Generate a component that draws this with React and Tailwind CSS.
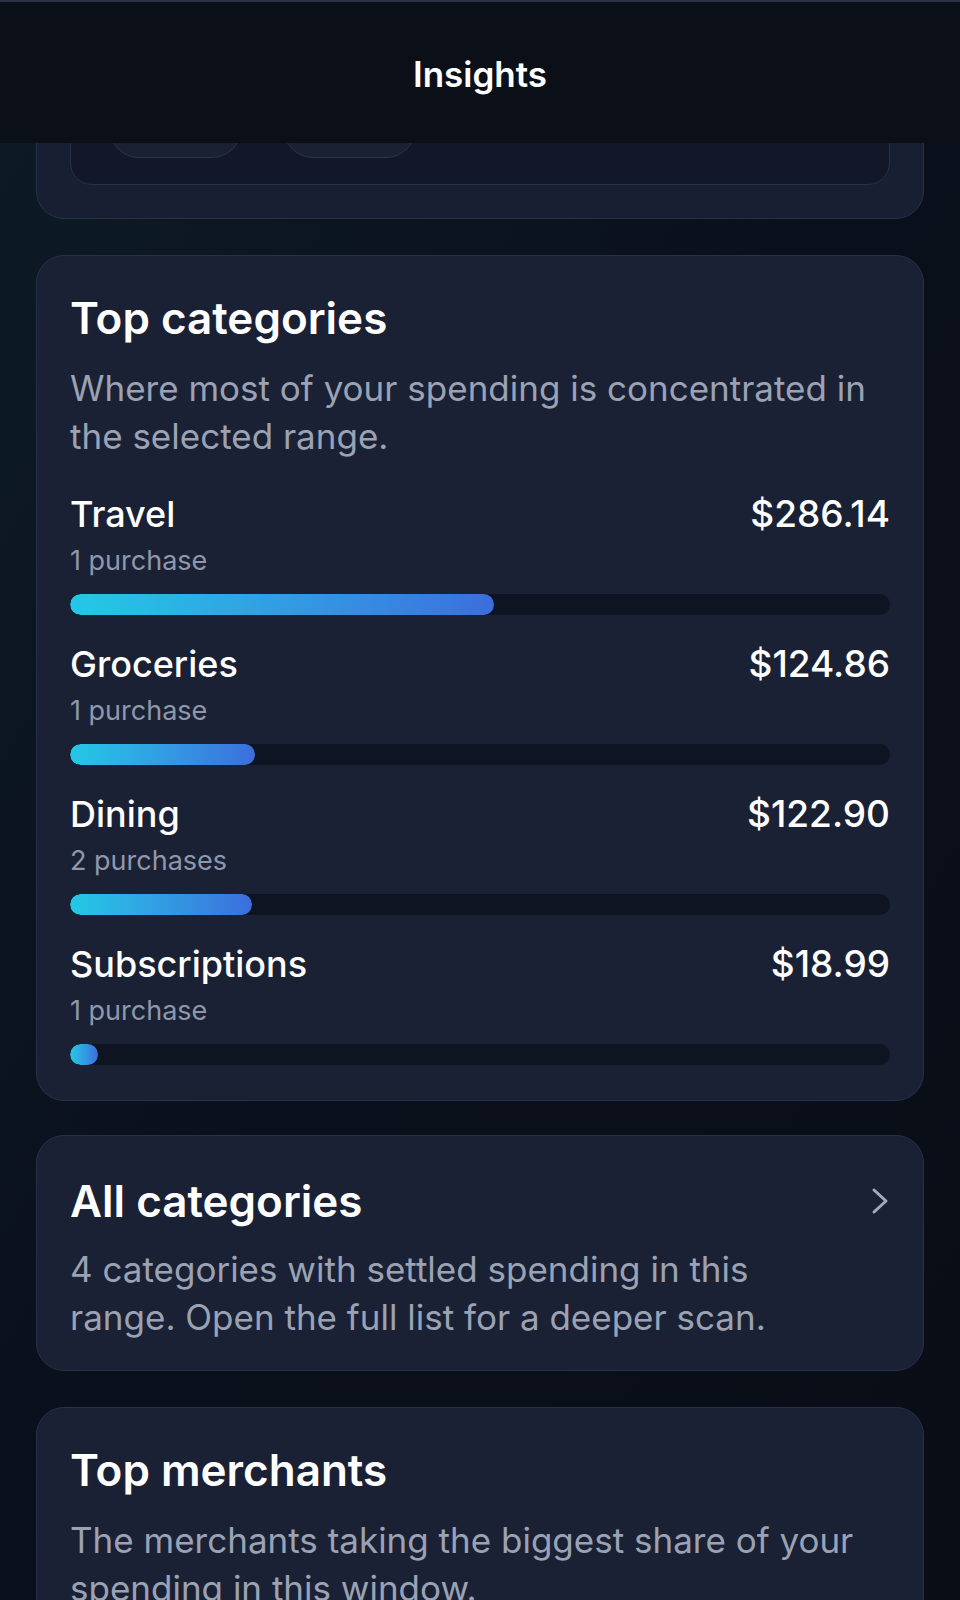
import React from "react";

const categories = [
  { name: "Travel", count: "1 purchase", amount: 286.14 },
  { name: "Groceries", count: "1 purchase", amount: 124.86 },
  { name: "Dining", count: "2 purchases", amount: 122.9 },
  { name: "Subscriptions", count: "1 purchase", amount: 18.99 },
];

const total = categories.reduce((sum, c) => sum + c.amount, 0);

const CategoryRow = ({ item }) => {
  const pct = (item.amount / total) * 100;
  return (
    <div className="pt-[29px]">
      <div className="flex items-center justify-between">
        <span className="text-[36px] leading-[40px] font-medium text-white">{item.name}</span>
        <span className="text-[37px] leading-[40px] font-medium text-white">${item.amount.toFixed(2)}</span>
      </div>
      <p className="mt-[11px] text-[27px] leading-[32px] text-[#8f98aa]">{item.count}</p>
      <div className="mt-[17px] h-[21px] w-full rounded-full bg-[#0f1422] overflow-hidden">
        <div
          className="h-full rounded-full bg-gradient-to-r from-[#22c9e6] to-[#3b6edc]"
          style={{ width: `${pct}%` }}
        />
      </div>
    </div>
  );
};

export default function App() {
  return (
    <div
      className="relative w-full h-[1600px] overflow-hidden bg-gradient-to-br from-[#0d1b25] via-[#0a101b] to-[#0a0d16]"
      style={{ fontFamily: "Inter, 'Noto Sans', sans-serif" }}
    >
      {/* page content */}
      <div className="flex flex-col px-[36px]">
        {/* previous card, scrolled under the header */}
        <div className="rounded-[28px] border border-[#29314a] bg-[#181f32] px-[33px] pt-[34px] pb-[33px]">
          <div className="rounded-[22px] border border-[#29314a] bg-[#121829] px-[38px] pt-[62px] pb-[26px]">
            <div className="flex gap-[41px]">
              <div className="h-[60px] w-[133px] rounded-[30px] border border-[#2c3448] bg-[#1a2133]" />
              <div className="h-[60px] w-[133px] rounded-[30px] border border-[#2c3448] bg-[#1a2133]" />
            </div>
          </div>
        </div>

        {/* Top categories */}
        <div className="mt-[36px] rounded-[28px] border border-[#29314a] bg-[#1a2135] px-[33px] pt-[36px] pb-[35px]">
          <h2 className="text-[44px] leading-[52px] font-semibold text-white">Top categories</h2>
          <p className="mt-[20px] text-[35px] leading-[48px] text-[#9aa2b3]">
            Where most of your spending is concentrated in the selected range.
          </p>
          <div className="mt-[5px]">
            {categories.map((item) => (
              <CategoryRow key={item.name} item={item} />
            ))}
          </div>
        </div>

        {/* All categories */}
        <div className="mt-[34px] flex items-start gap-[28px] rounded-[28px] border border-[#29314a] bg-[#1a2135] px-[33px] pt-[39px] pb-[29px]">
          <div className="flex-1 min-w-0">
            <h2 className="text-[44px] leading-[52px] font-semibold text-white">All categories</h2>
            <p className="mt-[18px] text-[35px] leading-[48px] text-[#9aa2b3]">
              4 categories with settled spending in this range. Open the full list for a deeper scan.
            </p>
          </div>
          <svg width="18" height="28" viewBox="0 0 18 28" fill="none" className="mt-[12px] mr-[1px] shrink-0">
            <path d="M3 3 L15 14 L3 25" stroke="#a3abbb" strokeWidth="3" strokeLinecap="round" strokeLinejoin="round" />
          </svg>
        </div>

        {/* Top merchants */}
        <div className="mt-[36px] rounded-[28px] border border-[#29314a] bg-[#1a2135] px-[33px] pt-[36px] pb-[35px]">
          <h2 className="text-[44px] leading-[52px] font-semibold text-white">Top merchants</h2>
          <p className="mt-[20px] text-[35px] leading-[48px] text-[#9aa2b3]">
            The merchants taking the biggest share of your spending in this window.
          </p>
          <div className="h-[300px]" />
        </div>
      </div>

      {/* header overlay */}
      <div className="absolute top-0 left-0 right-0 h-[143px] border-t-2 border-[#2a3347] bg-[#0a0f18] flex items-center justify-center">
        <h1 className="pt-[4px] text-[35px] font-semibold text-white">Insights</h1>
      </div>
    </div>
  );
}
